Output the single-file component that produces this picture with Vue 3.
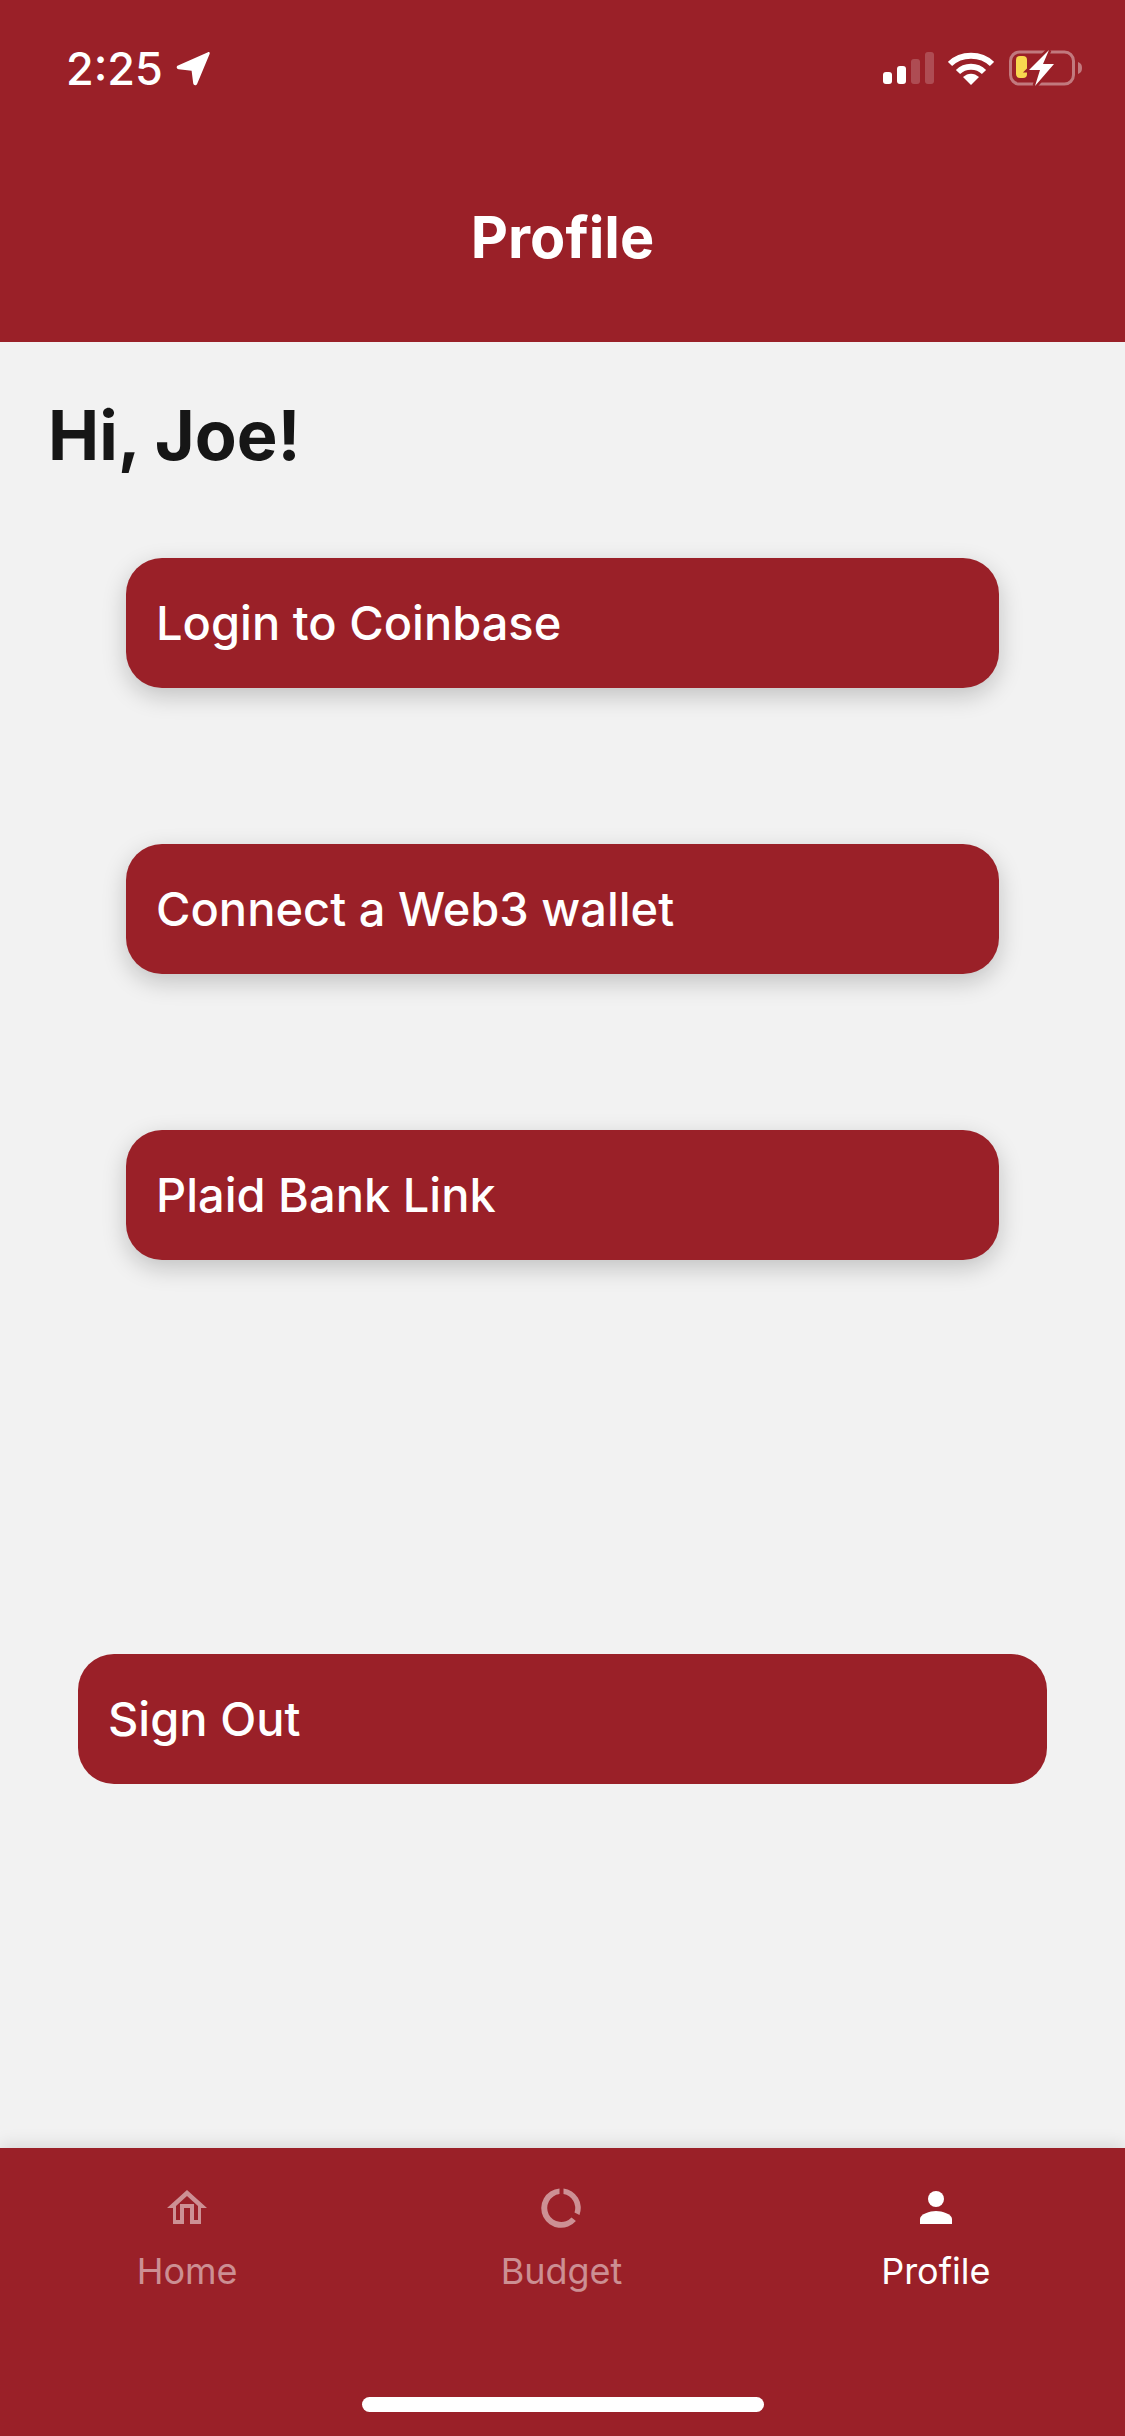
<script setup>
const links = ['Login to Coinbase', 'Connect a Web3 wallet', 'Plaid Bank Link'];
</script>

<template>
  <div class="screen">
    <header class="top">
      <div class="status">
        <div class="time">
          <span>2:25</span>
          <svg class="arrow" width="35" height="35" viewBox="0 0 35 35">
            <path d="M33 1.2 3 14.500c-2 .9-1.600 3.600.6 3.800l13 1.400 1.600 12.600c.3 2.200 3 2.500 3.900.6L34.600 3c.5-1.200-.4-2.300-1.600-1.800Z" fill="#fff" />
          </svg>
        </div>
        <div class="indicators">
          <svg class="signal" width="52" height="32" viewBox="0 0 52 32">
            <rect x="0" y="20" width="9" height="12" rx="3" fill="#fff" />
            <rect x="14" y="14" width="9" height="18" rx="3" fill="#fff" />
            <rect x="28" y="7" width="9" height="25" rx="3" fill="#fff" opacity=".2" />
            <rect x="42" y="0" width="9" height="32" rx="3" fill="#fff" opacity=".2" />
          </svg>
          <svg width="46" height="33" viewBox="0 0 46 33">
            <path d="M2 12C13 1 33 1 44 12" fill="none" stroke="#fff" stroke-width="6" />
            <path d="M10 20c7-7 19-7 26 0" fill="none" stroke="#fff" stroke-width="6" />
            <path d="M15 25c5-4.500 11-4.500 16 0l-8 8Z" fill="#fff" />
          </svg>
          <svg width="74" height="36" viewBox="0 0 74 36">
            <rect x="1.500" y="2" width="63" height="32" rx="9" fill="none" stroke="#fff" stroke-opacity=".4" stroke-width="3" />
            <path d="M69 12c3 1 4 3 4 6s-1 5-4 6Z" fill="#fff" opacity=".4" />
            <rect x="7" y="6" width="11" height="22" rx="4" fill="#f8d74f" />
            <path d="M40 0 20 20h11L26 36 45 14H34Z" fill="#fff" stroke="#9a2028" stroke-width="5" paint-order="stroke" />
          </svg>
        </div>
      </div>
      <h1>Profile</h1>
    </header>

    <main class="content">
      <h2>Hi, Joe!</h2>
      <div class="links">
        <button v-for="item in links" :key="item" class="btn raised">{{ item }}</button>
      </div>
      <button class="btn signout">Sign Out</button>
    </main>

    <nav class="tabs">
      <div class="tab">
        <svg width="40" height="36" viewBox="0 0 40 36">
          <path d="M20 0 0 18h6v16h11V18h6v16h11V18h6Z M20 6l11 10v14h-4V14H13v16H9V16Z" fill="currentColor" fill-rule="evenodd" />
        </svg>
        <span>Home</span>
      </div>
      <div class="tab">
        <svg width="41" height="41" viewBox="0 0 40 40">
          <path d="M18 .5v5.600A14 14 0 1 0 30 29.500l4.400 3.500A19.700 19.700 0 1 1 18 .5Z M22 .5A19.700 19.700 0 0 1 38 27l-5-2.600A14 14 0 0 0 22 6.100Z" fill="currentColor" />
        </svg>
        <span>Budget</span>
      </div>
      <div class="tab active">
        <svg width="34" height="34" viewBox="0 0 34 34">
          <circle cx="17" cy="8" r="8" fill="#fff" />
          <path d="M1 33v-5c0-5 10-8 16-8s16 3 16 8v5Z" fill="#fff" />
        </svg>
        <span>Profile</span>
      </div>
      <div class="home-bar"></div>
    </nav>
  </div>
</template>

<style scoped>
.screen {
  width: 1125px;
  height: 2436px;
  display: flex;
  flex-direction: column;
  background: #f2f2f2;
  font-family: Inter, "Liberation Sans", sans-serif;
  overflow: hidden;
}

.top {
  height: 342px;
  background: #9a2028;
  color: #fff;
  box-sizing: border-box;
  padding-top: 44px;
}

.status {
  display: flex;
  justify-content: space-between;
  padding: 0 42px 0 66px;
  height: 48px;
  align-items: center;
}

.time {
  display: flex;
  align-items: center;
  gap: 12px;
  font-size: 45px;
  font-weight: 500;
}

.indicators {
  display: flex;
  align-items: center;
  gap: 15px;
}

.signal {
  margin-right: -2px;
}

.top h1 {
  margin: 111px 0 0;
  text-align: center;
  font-size: 57.500px;
  line-height: 68px;
  font-weight: 700;
}

.content {
  flex: 1;
  min-height: 0;
  display: flex;
  flex-direction: column;
}

.content h2 {
  margin: 51px 0 0 48px;
  font-size: 68.500px;
  line-height: 85px;
  font-weight: 700;
  color: #161616;
}

.links {
  display: flex;
  flex-direction: column;
  gap: 156px;
  padding: 0 126px;
  margin-top: 80px;
}

.btn {
  height: 130px;
  border: none;
  border-radius: 36px;
  background: #9a2028;
  color: #fff;
  font-family: inherit;
  font-size: 47px;
  font-weight: 550;
  text-align: left;
  padding: 0 30px 2px;
}

.raised {
  box-shadow: 0 8px 24px rgba(0, 0, 0, .2);
}

.signout {
  margin: 394px 78px 0;
}

.tabs {
  position: relative;
  height: 288px;
  background: #9a2028;
  display: flex;
  padding-right: 2px;
  box-shadow: 0 -4px 16px rgba(0, 0, 0, .1);
}

.tab {
  flex: 1;
  display: flex;
  flex-direction: column;
  align-items: center;
  padding-top: 40px;
  color: rgba(255, 255, 255, .5);
  font-size: 36px;
}

.tab svg {
  height: 40px;
}

.tab span {
  margin-top: 21px;
  line-height: 44px;
}

.tab.active {
  color: #fff;
}

.home-bar {
  position: absolute;
  left: 362px;
  top: 249px;
  width: 402px;
  height: 15px;
  border-radius: 8px;
  background: #fff;
}
</style>
